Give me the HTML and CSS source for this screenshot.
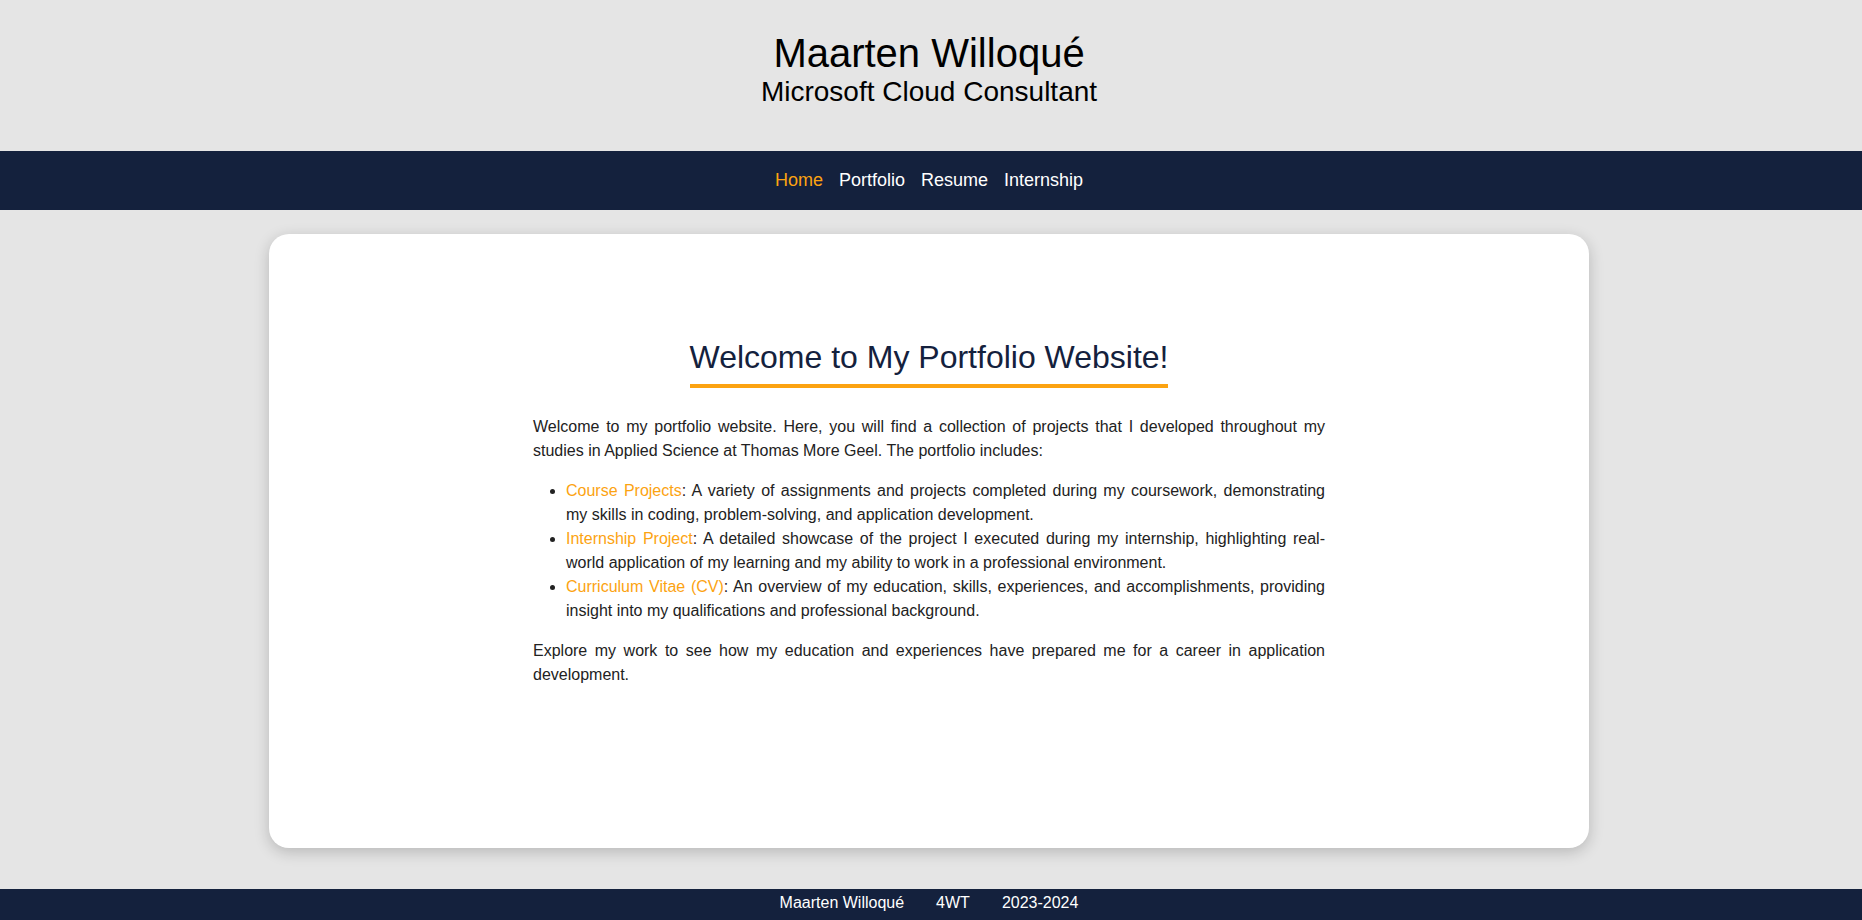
FILE: index.html
```html
<!DOCTYPE html>
<html lang="en">
<head>
<meta charset="utf-8">
<title>Maarten Willoqué - Portfolio</title>
<link rel="stylesheet" href="styles.css">
</head>
<body>
<header class="site-header">
  <h1 class="site-name">Maarten Willoqué</h1>
  <p class="site-role">Microsoft Cloud Consultant</p>
</header>
<nav class="site-nav">
  <a href="#" class="nav-link active">Home</a>
  <a href="#" class="nav-link">Portfolio</a>
  <a href="#" class="nav-link">Resume</a>
  <a href="#" class="nav-link">Internship</a>
</nav>
<div class="page">
  <main class="card">
    <section class="intro">
      <div class="title-wrap"><h2 class="title">Welcome to My Portfolio Website!</h2></div>
      <p class="text">Welcome to my portfolio website. Here, you will find a collection of projects that I developed throughout my studies in Applied Science at Thomas More Geel. The portfolio includes:</p>
      <ul class="list">
        <li><a href="#" class="hl">Course Projects</a>: A variety of assignments and projects completed during my coursework, demonstrating my skills in coding, problem-solving, and application development.</li>
        <li><a href="#" class="hl">Internship Project</a>: A detailed showcase of the project I executed during my internship, highlighting real-world application of my learning and my ability to work in a professional environment.</li>
        <li><a href="#" class="hl">Curriculum Vitae (CV)</a>: An overview of my education, skills, experiences, and accomplishments, providing insight into my qualifications and professional background.</li>
      </ul>
      <p class="text last">Explore my work to see how my education and experiences have prepared me for a career in application development.</p>
    </section>
  </main>
</div>
<footer class="site-footer">
  <span>Maarten Willoqué</span>
  <span>4WT</span>
  <span>2023-2024</span>
</footer>
</body>
</html>
```
FILE: styles.css
```css
* { box-sizing: border-box; }
html, body { margin: 0; padding: 0; }
body {
  background: #e5e5e5;
  font-family: "Liberation Sans", Arial, sans-serif;
  color: #000;
}
.site-header {
  padding: 31px 4px 43px 0;
  text-align: center;
}
.site-name {
  margin: 0;
  font-size: 40px;
  font-weight: 400;
  line-height: 45px;
}
.site-role {
  margin: 0;
  font-size: 28px;
  line-height: 32px;
}
.site-nav {
  background: #14213d;
  display: flex;
  justify-content: center;
  gap: 16px;
  padding: 19px 4px 19px 0;
  font-size: 18px;
  line-height: 21px;
}
.nav-link {
  color: #fff;
  text-decoration: none;
}
.nav-link.active { color: #fca311; }
.page {
  padding: 24px 4px 41px 0;
}
.card {
  width: 1320px;
  margin: 0 auto;
  background: #fff;
  border-radius: 20px;
  box-shadow: 0 4px 15px rgba(0, 0, 0, 0.2);
  padding: 105px 0 161px;
}
.intro {
  width: 792px;
  margin: 0 auto;
}
.title-wrap {
  text-align: center;
  margin-bottom: 27px;
}
.title {
  display: inline-block;
  margin: 0;
  font-size: 32px;
  font-weight: 400;
  line-height: 37px;
  color: #14213d;
  padding-bottom: 8px;
  border-bottom: 4px solid #fca311;
}
.text, .list {
  font-size: 16px;
  line-height: 24px;
  color: #222;
  text-align: justify;
  margin: 0 0 16px;
}
.text.last { margin-bottom: 0; }
.list { padding-left: 33px; }
.hl {
  color: #fca311;
  text-decoration: none;
}
.site-footer {
  background: #14213d;
  color: #fff;
  display: flex;
  justify-content: center;
  gap: 32px;
  font-size: 16px;
  line-height: 18px;
  padding: 5px 4px 8px 0;
}
```
